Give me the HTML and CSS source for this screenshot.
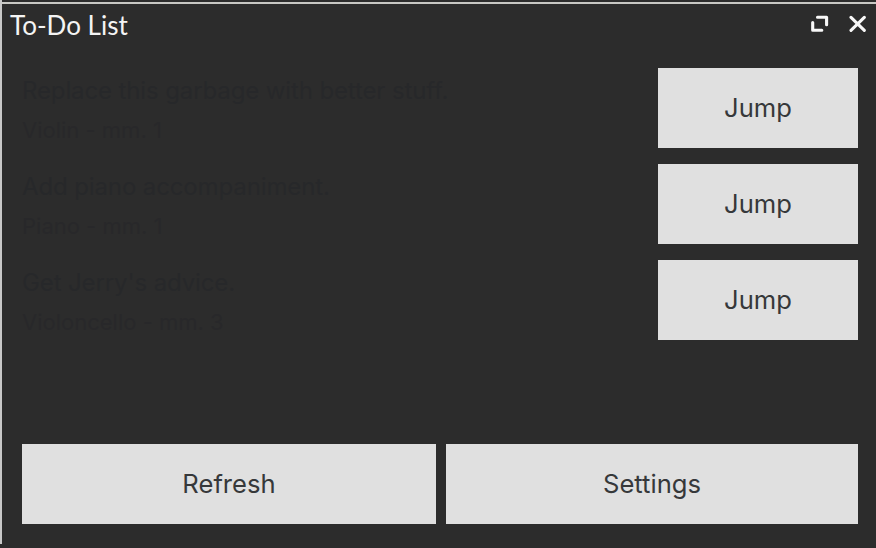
FILE: index.html
```html
<!DOCTYPE html>
<html lang="en">
<head>
<meta charset="utf-8">
<title>To-Do List</title>
<link rel="stylesheet" href="styles.css">
</head>
<body>
<main class="panel">
  <header class="titlebar">
    <h1 class="title">To-Do List</h1>
    <div class="controls">
      <svg class="icon" width="18" height="18" viewBox="0 0 18 18"><path d="M6.5 2.2H15.6V9.8M1.7 7.5V15.3H10.8"/></svg>
      <svg class="icon" width="18" height="18" viewBox="0 0 18 18"><path d="M2 2.4L15.3 15.3M15.3 2.4L2 15.3"/></svg>
    </div>
  </header>
  <ul class="list">
    <li class="item">
      <div class="text"><p class="task">Replace this garbage with better stuff.</p><p class="place">Violin - mm. 1</p></div>
      <button class="button jump">Jump</button>
    </li>
    <li class="item">
      <div class="text"><p class="task">Add piano accompaniment.</p><p class="place">Piano - mm. 1</p></div>
      <button class="button jump">Jump</button>
    </li>
    <li class="item">
      <div class="text"><p class="task">Get Jerry's advice.</p><p class="place">Violoncello - mm. 3</p></div>
      <button class="button jump">Jump</button>
    </li>
  </ul>
  <footer class="actions">
    <button class="button">Refresh</button>
    <button class="button">Settings</button>
  </footer>
</main>
</body>
</html>
```

FILE: styles.css
```css
* { box-sizing: border-box; }
body {
  margin: 0;
  height: 548px;
  padding-bottom: 4px;
  background: #2c2c2c;
  overflow: hidden;
  font-family: Inter, "Liberation Sans", sans-serif;
}
.panel {
  height: 544px;
  display: flex;
  flex-direction: column;
  padding: 2px 18px 20px 20px;
  border-left: 2px solid #c8c8c8;
}
.titlebar {
  height: 46px;
  margin: 0 -18px 0 -20px;
  padding: 0 9px 0 8px;
  border-top: 2px solid #c8c8c4;
  display: flex;
  justify-content: space-between;
}
.title {
  margin: 4px 0 0;
  font: 400 26px/34px Lato, sans-serif;
  color: #f4f4f4;
}
.controls { display: flex; gap: 20px; padding-top: 11px; }
.icon {
  fill: none;
  stroke: #f8f8f8;
  stroke-width: 3.1;
  stroke-linecap: round;
  stroke-linejoin: round;
}
.list {
  list-style: none;
  margin: 20px 0 0;
  padding: 0;
  display: flex;
  flex-direction: column;
  gap: 16px;
}
.item { height: 80px; display: flex; justify-content: space-between; }
.task, .place { margin: 0; white-space: nowrap; }
.task {
  margin-top: 6px;
  font-size: 24px;
  line-height: 34px;
  letter-spacing: -0.12px;
  color: #27282a;
}
.place { margin-top: 6px; font-size: 22px; line-height: 32px; color: #28282a; }
.button {
  height: 80px;
  padding: 0;
  border: 0;
  border-radius: 0;
  background: #e0e0e0;
  color: #36383a;
  font: 400 25.6px/80px Inter, sans-serif;
}
.jump { width: 200px; }
.actions {
  margin-top: auto;
  display: grid;
  grid-template-columns: 414px 412px;
  gap: 10px;
}
```
